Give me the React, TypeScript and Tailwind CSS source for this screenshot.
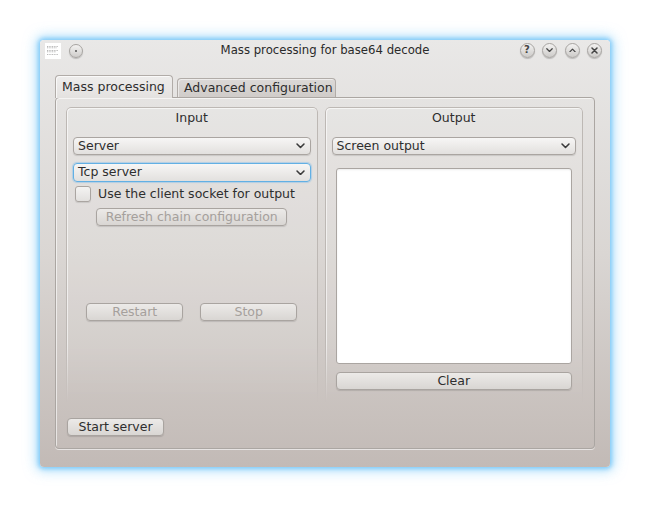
import React from "react";

function Chevron({ up = false, size = 9, stroke = "#3a3a3a", sw = 1.6 }: { up?: boolean; size?: number; stroke?: string; sw?: number }) {
  return (
    <svg width={size} height={size * 0.66} viewBox="0 0 9 6" fill="none">
      <path d={up ? "M1 5 L4.5 1.5 L8 5" : "M1 1 L4.5 4.5 L8 1"} stroke={stroke} strokeWidth={sw} strokeLinecap="round" strokeLinejoin="round" />
    </svg>
  );
}

function Combo({ label, focus = false }: { label: string; focus?: boolean }) {
  return (
    <div
      className={`flex items-center justify-between ${focus ? "h-[19px] border-[#62b0e4] shadow-[0_0_1px_1px_rgba(120,185,235,0.45)]" : "h-[18px] border-[#aaa5a1] shadow-[0_1px_1px_rgba(0,0,0,0.12)]"} rounded-[4px] border bg-gradient-to-b from-[#f7f6f5] to-[#e2e0de] pl-[4px] pr-[5px] text-[#2e2e2e]`}
    >
      <span className="leading-none">{label}</span>
      <Chevron />
    </div>
  );
}

function Btn({ label, disabled = false, className = "" }: { label: string; disabled?: boolean; className?: string }) {
  return (
    <div
      className={`flex h-[18px] items-center justify-center rounded-[4px] border border-[#a9a4a0] bg-gradient-to-b from-[#eceae8] to-[#d9d6d3] shadow-[0_1px_1px_rgba(0,0,0,0.12)] leading-none ${disabled ? "text-[#a5a09c]" : "text-[#2e2e2e]"} ${className}`}
    >
      {label}
    </div>
  );
}

function GroupFrame() {
  return (
    <div className="pointer-events-none absolute inset-0 rounded-t-[5px] border border-b-0 border-[#bdb8b4] bg-white/10 shadow-[inset_1px_1px_0_rgba(255,255,255,0.6)] [mask-image:linear-gradient(to_bottom,black_80%,transparent)]" />
  );
}

function TitleBtn({ children }: { children: React.ReactNode }) {
  return (
    <div className="flex h-[15px] w-[15px] items-center justify-center rounded-full border border-[#a7a4a1] bg-gradient-to-b from-[#f3f2f1] to-[#cdcbc9] shadow-[0_1px_1px_rgba(0,0,0,0.2)]">
      {children}
    </div>
  );
}

export default function App() {
  return (
    <div className="h-[507px] w-[650px] bg-white pl-[40px] pt-[40px] font-['DejaVu_Sans',sans-serif] text-[12.5px] text-[#2e2e2e]">
      <div className="flex h-[427px] w-[570px] flex-col rounded-[4px] bg-gradient-to-b from-[#e9e8e7] via-[#dad6d3] to-[#c2bab6] shadow-[0_0_4px_2px_rgba(110,195,248,0.8),0_0_12px_5px_rgba(140,210,250,0.55)]">
        {/* Title bar */}
        <div className="grid h-[20px] grid-cols-[1fr_auto_1fr] items-center">
          <div className="flex items-center gap-[8px] pl-[5px] pt-[1px]">
            <svg width="16" height="16" viewBox="0 0 16 16">
              <rect x="0" y="0" width="16" height="16" fill="#ffffff" />
              <g stroke="#9a9a9a" strokeWidth="0.7" strokeDasharray="1 0.7">
                <line x1="2" y1="3.5" x2="13" y2="3.5" />
                <line x1="2" y1="4.8" x2="12" y2="4.8" />
                <line x1="2" y1="7.5" x2="13" y2="7.5" />
                <line x1="2" y1="8.8" x2="11" y2="8.8" />
                <line x1="2" y1="11.5" x2="13" y2="11.5" />
              </g>
            </svg>
            <div className="flex h-[14px] w-[14px] items-center justify-center rounded-full border border-[#a7a4a1] bg-gradient-to-b from-[#f3f2f1] to-[#cfcdcb] shadow-[0_1px_1px_rgba(0,0,0,0.2)]">
              <div className="h-[2px] w-[2px] rounded-full bg-[#555]" />
            </div>
          </div>
          <div className="pt-[1px] text-[11.7px] text-[#2a2a2a]">Mass processing for base64 decode</div>
          <div className="flex items-center justify-end gap-[7.5px] pr-[8px]">
            <TitleBtn>
              <span className="text-[10px] font-bold leading-none text-[#444]">?</span>
            </TitleBtn>
            <TitleBtn>
              <Chevron size={7} stroke="#444" sw={1.6} />
            </TitleBtn>
            <TitleBtn>
              <Chevron up size={7} stroke="#444" sw={1.6} />
            </TitleBtn>
            <TitleBtn>
              <svg width="7" height="7" viewBox="0 0 7 7">
                <path d="M1 1 L6 6 M6 1 L1 6" stroke="#444" strokeWidth="1.5" strokeLinecap="round" />
              </svg>
            </TitleBtn>
          </div>
        </div>

        {/* Tabs */}
        <div className="mt-[15px] flex h-[22px] items-end gap-[4px] pl-[15px]">
          <div className="relative z-10 flex h-[23px] w-[118px] -mb-[1px] items-center rounded-t-[4px] border border-b-0 border-[#b1aca8] bg-gradient-to-b from-[#eeedec] to-[#e4e2e0] pl-[6px] pt-[1px] shadow-[inset_1px_1px_0_rgba(255,255,255,0.7)]">
            Mass processing
          </div>
          <div className="flex h-[19px] w-[159px] items-center rounded-t-[4px] border border-b-0 border-[#b1aca8] bg-gradient-to-b from-[#dcd9d7] to-[#d0ccc9] pl-[6px] shadow-[inset_1px_1px_0_rgba(255,255,255,0.5)]">
            Advanced configuration
          </div>
        </div>

        {/* Panel */}
        <div className="mx-[15px] flex h-[352px] flex-col rounded-[4px] border border-[#aba6a2] pl-[10px] pr-[11px] pt-[9px] shadow-[inset_1px_1px_0_rgba(255,255,255,0.6),0_1px_0_rgba(255,255,255,0.6)]">
          <div className="flex h-[295px] gap-[7px]">
            {/* Input */}
            <div className="relative flex w-[252px] flex-col">
              <GroupFrame />
              <div className="relative flex flex-col px-[7px] pt-[3px]">
                <div className="h-[16px] text-center leading-[16px]">Input</div>
                <div className="mt-[11px]">
                  <Combo label="Server" />
                </div>
                <div className="mt-[8px]">
                  <Combo label="Tcp server" focus />
                </div>
                <div className="mt-[4px] flex h-[16px] items-center gap-[7px] pl-[2px]">
                  <div className="h-[16px] w-[16px] rounded-[3px] border border-[#aaa5a1] bg-gradient-to-b from-[#f4f3f2] to-[#e2e0de] shadow-[0_1px_1px_rgba(0,0,0,0.1)]" />
                  <span className="leading-none">Use the client socket for output</span>
                </div>
                <div className="mt-[6px] flex justify-center">
                  <Btn label="Refresh chain configuration" disabled className="w-[191px]" />
                </div>
                <div className="mt-[77px] flex justify-center gap-[17px]">
                  <Btn label="Restart" disabled className="w-[97px]" />
                  <Btn label="Stop" disabled className="w-[97px]" />
                </div>
              </div>
            </div>

            {/* Output */}
            <div className="relative flex w-[259px] flex-col">
              <GroupFrame />
              <div className="relative flex flex-col px-[7px] pt-[3px]">
                <div className="h-[16px] text-center leading-[16px]">Output</div>
                <div className="mt-[11px]">
                  <Combo label="Screen output" />
                </div>
                <div className="mx-[4px] mt-[13px] h-[196px] rounded-[3px] border border-[#aaa5a1] bg-white shadow-[inset_0_1px_2px_rgba(0,0,0,0.08)]" />
                <div className="mx-[4px] mt-[8px]">
                  <Btn label="Clear" />
                </div>
              </div>
            </div>
          </div>
          <div className="ml-[1px] mt-[16px]">
            <Btn label="Start server" className="w-[97px]" />
          </div>
        </div>
      </div>
    </div>
  );
}
